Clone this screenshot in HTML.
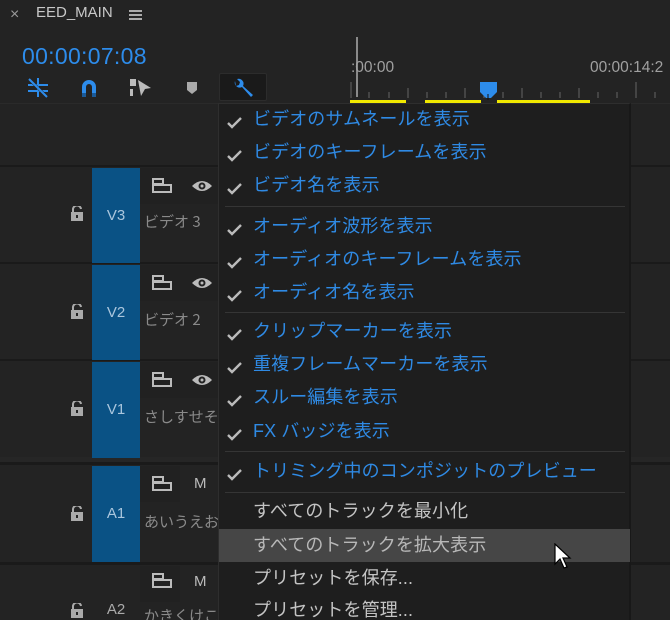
<!DOCTYPE html>
<html style="overflow:hidden;width:670px;height:620px"><head><meta charset="utf-8"><style>
*{margin:0;padding:0;box-sizing:border-box}
body{width:670px;height:620px;overflow:hidden;background:#232323;position:relative;font-family:"Liberation Sans","Noto Sans CJK JP",sans-serif;}
.a{position:absolute}
.row{position:absolute;left:0;width:670px;border-top:2px solid #1a1a1a}
.vb{position:absolute;left:92px;width:48px;background:#0a5285;color:#aac6dd;font-size:15px;text-align:center}
.menu{position:absolute;left:218px;top:103px;width:413px;height:517px;background:#1e1e1e;border:1px solid #2e2e2e;border-bottom:none;border-right:2px solid #181818}
.it{position:absolute;left:34px;font-size:18px;color:#2f8ae4;white-space:nowrap;letter-spacing:0.1px;line-height:24px}
.g{color:#c4c4c4}
.ck{position:absolute;left:8px;width:16px;height:12px}
.sep{position:absolute;left:6px;width:400px;height:1px;background:#353535}
.nm{position:absolute;left:144px;font-size:15px;color:#8a8a8a;white-space:nowrap;font-family:"Noto Sans CJK JP",sans-serif}
</style></head><body>
<div class="a" style="left:10px;top:6px;font-size:16px;color:#9a9a9a">×</div>
<div class="a" style="left:36px;top:4px;font-size:15px;color:#c8c8c8">EED_MAIN</div>
<div class="a" style="left:129px;top:10px;width:13px;height:2px;background:#aaa;box-shadow:0 4px 0 #aaa,0 8px 0 #aaa"></div>
<div class="a" style="left:22px;top:43px;font-size:23px;color:#2d8ceb;letter-spacing:0.3px">00:00:07:08</div>
<svg class="a" style="left:26px;top:77px" width="24" height="22"><g stroke="#2d8ceb" stroke-width="2"><line x1="12" y1="1" x2="12" y2="20"/><line x1="2" y1="8" x2="22" y2="8"/><line x1="2" y1="14" x2="22" y2="14"/><line x1="3" y1="2" x2="21" y2="20" stroke="#232323" stroke-width="3"/><line x1="3" y1="2" x2="21" y2="20"/></g></svg>
<svg class="a" style="left:80px;top:78px" width="18" height="20"><path d="M2 19V9a7 7 0 0 1 14 0v10h-4V9a3 3 0 0 0-6 0v10z" fill="#2d8ceb"/><rect x="2" y="15" width="4" height="4" fill="#1b5a98"/><rect x="12" y="15" width="4" height="4" fill="#1b5a98"/></svg>
<svg class="a" style="left:129px;top:78px" width="24" height="22"><path d="M1 1h6v7H1zM1 11h3v7H1zM9 2l13 8-6 1-4 7z" fill="#bbb"/></svg>
<svg class="a" style="left:186px;top:81px" width="12" height="14"><path d="M1 1h10v8l-5 4-5-4z" fill="#aaa"/></svg>
<div class="a" style="left:219px;top:73px;width:48px;height:28px;background:#1a1a1a;border:1px solid #2c2c2c;border-radius:2px"></div>
<svg class="a" style="left:231px;top:77px" width="24" height="22"><path d="M4 4a5 5 0 0 0 7 6l9 10 2-2-10-9a5 5 0 0 0-6-7l3 3-1 3-3 1z" fill="#2d8ceb"/></svg>
<div class="a" style="left:356px;top:37px;width:2px;height:60px;background:#8a8a8a"></div>
<div class="a" style="left:351px;top:59px;font-size:15.5px;color:#a0a0a0">:00:00</div>
<div class="a" style="left:590px;top:59px;font-size:15.5px;color:#a0a0a0">00:00:14:2</div>
<svg class="a" style="left:350px;top:80px" width="320" height="20"><g stroke="#666" stroke-width="1">
<line x1="1" y1="2" x2="1" y2="18"/><line x1="19" y1="12" x2="19" y2="18"/><line x1="39" y1="12" x2="39" y2="18"/><line x1="58" y1="8" x2="58" y2="18"/><line x1="77" y1="12" x2="77" y2="18"/><line x1="96" y1="12" x2="96" y2="18"/><line x1="115" y1="8" x2="115" y2="18"/><line x1="134" y1="12" x2="134" y2="18"/><line x1="153" y1="12" x2="153" y2="18"/><line x1="172" y1="8" x2="172" y2="18"/><line x1="191" y1="12" x2="191" y2="18"/><line x1="210" y1="12" x2="210" y2="18"/><line x1="229" y1="8" x2="229" y2="18"/><line x1="248" y1="12" x2="248" y2="18"/><line x1="267" y1="12" x2="267" y2="18"/><line x1="286" y1="2" x2="286" y2="18"/><line x1="305" y1="12" x2="305" y2="18"/></g>
<path d="M130 2h17v10l-6 6h-5l-6-6z" fill="#2d8ceb"/><line x1="138" y1="14" x2="138" y2="20" stroke="#111" stroke-width="1"/></svg>
<div class="a" style="left:350px;top:100px;width:56px;height:3px;background:#f0e800"></div>
<div class="a" style="left:425px;top:100px;width:56px;height:3px;background:#f0e800"></div>
<div class="a" style="left:497px;top:100px;width:93px;height:3px;background:#f0e800"></div>
<div class="a" style="left:0;top:103px;width:670px;height:1px;background:#2a2a2a"></div>
<div class="row" style="top:165px;height:99px"></div>
<div class="row" style="top:262px;height:99px"></div>
<div class="row" style="top:359px;height:99px"></div>
<div class="row" style="top:462px;height:99px;border-top:3px solid #1a1a1a"></div>
<div class="row" style="top:562px;height:58px;border-top:3px solid #1a1a1a"></div>
<div class="a" style="left:0;top:457px;width:670px;height:5px;background:#262626"></div>
<div class="vb" style="top:168px;height:95px;line-height:95px">V3</div>
<div class="vb" style="top:265px;height:95px;line-height:95px">V2</div>
<div class="vb" style="top:362px;height:96px;line-height:96px">V1</div>
<div class="vb" style="top:466px;height:96px;line-height:96px">A1</div>
<div class="a" style="left:92px;top:601px;width:48px;color:#aaa;font-size:15px;text-align:center">A2</div>
<div class="a" style="left:140px;top:168px;width:78px;height:36px;background:#212121"></div>
<div class="a" style="left:140px;top:265px;width:78px;height:36px;background:#212121"></div>
<div class="a" style="left:140px;top:362px;width:78px;height:36px;background:#212121"></div>
<div class="a" style="left:140px;top:466px;width:40px;height:36px;background:#212121"></div>
<div class="a" style="left:140px;top:566px;width:40px;height:36px;background:#212121"></div>
<div class="nm" style="top:211px">ビデオ 3</div>
<div class="nm" style="top:309px">ビデオ 2</div>
<div class="nm" style="top:406px">さしすせそ</div>
<div class="nm" style="top:511px">あいうえお</div>
<div class="nm" style="top:605px">かきくけこ</div>
<svg width="0" height="0" style="position:absolute"><defs>
<g id="lk"><rect x="0" y="6" width="12" height="9" fill="#aaa"/><path d="M2 6V4a4 4 0 0 1 8-1" stroke="#aaa" stroke-width="2" fill="none"/><rect x="5" y="9" width="2" height="3" fill="#232323"/></g>
<g id="sq"><path d="M1 1h10v5H1zM1 7h18v7H1z" fill="none" stroke="#bbb" stroke-width="2"/></g>
<g id="ey"><path d="M0 7Q10 -3 20 7Q10 17 0 7z" fill="#bbb"/><circle cx="10" cy="7" r="3.5" fill="#232323"/><circle cx="10" cy="7" r="1.5" fill="#bbb"/></g>
<g id="ck"><path d="M1 6l4 4 9-9" stroke="#bbb" stroke-width="2.4" fill="none"/></g>
</defs></svg>
<svg class="a" style="left:71px;top:206px" width="12" height="16"><use href="#lk"/></svg>
<svg class="a" style="left:71px;top:304px" width="12" height="16"><use href="#lk"/></svg>
<svg class="a" style="left:71px;top:401px" width="12" height="16"><use href="#lk"/></svg>
<svg class="a" style="left:71px;top:506px" width="12" height="16"><use href="#lk"/></svg>
<svg class="a" style="left:71px;top:603px" width="12" height="16"><use href="#lk"/></svg>
<svg class="a" style="left:152px;top:178px" width="20" height="16"><use href="#sq"/></svg>
<svg class="a" style="left:152px;top:275px" width="20" height="16"><use href="#sq"/></svg>
<svg class="a" style="left:152px;top:372px" width="20" height="16"><use href="#sq"/></svg>
<svg class="a" style="left:152px;top:476px" width="20" height="16"><use href="#sq"/></svg>
<svg class="a" style="left:152px;top:573px" width="20" height="16"><use href="#sq"/></svg>
<svg class="a" style="left:192px;top:179px" width="20" height="14"><use href="#ey"/></svg>
<svg class="a" style="left:192px;top:276px" width="20" height="14"><use href="#ey"/></svg>
<svg class="a" style="left:192px;top:373px" width="20" height="14"><use href="#ey"/></svg>
<div class="a" style="left:194px;top:475px;font-size:15px;color:#bbb">M</div>
<div class="a" style="left:194px;top:573px;font-size:15px;color:#bbb">M</div>
<div class="menu">
<svg class="ck" style="top:13px"><use href="#ck"/></svg><div class="it" style="top:3px">ビデオのサムネールを表示</div>
<svg class="ck" style="top:46px"><use href="#ck"/></svg><div class="it" style="top:36px">ビデオのキーフレームを表示</div>
<svg class="ck" style="top:79px"><use href="#ck"/></svg><div class="it" style="top:69px">ビデオ名を表示</div>
<div class="sep" style="top:102px"></div>
<svg class="ck" style="top:120px"><use href="#ck"/></svg><div class="it" style="top:110px">オーディオ波形を表示</div>
<svg class="ck" style="top:153px"><use href="#ck"/></svg><div class="it" style="top:143px">オーディオのキーフレームを表示</div>
<svg class="ck" style="top:186px"><use href="#ck"/></svg><div class="it" style="top:176px">オーディオ名を表示</div>
<div class="sep" style="top:208px"></div>
<svg class="ck" style="top:225px"><use href="#ck"/></svg><div class="it" style="top:215px">クリップマーカーを表示</div>
<svg class="ck" style="top:258px"><use href="#ck"/></svg><div class="it" style="top:248px">重複フレームマーカーを表示</div>
<svg class="ck" style="top:291px"><use href="#ck"/></svg><div class="it" style="top:281px">スルー編集を表示</div>
<svg class="ck" style="top:325px"><use href="#ck"/></svg><div class="it" style="top:315px">FX バッジを表示</div>
<div class="sep" style="top:347px"></div>
<svg class="ck" style="top:365px"><use href="#ck"/></svg><div class="it" style="top:355px">トリミング中のコンポジットのプレビュー</div>
<div class="sep" style="top:388px"></div>
<div class="it g" style="top:395px">すべてのトラックを最小化</div>
<div class="a" style="left:0;top:425px;width:411px;height:33px;background:#464646"></div>
<div class="it" style="top:429px;color:#b8b8b8">すべてのトラックを拡大表示</div>
<div class="it g" style="top:462px">プリセットを保存...</div>
<div class="it g" style="top:494px">プリセットを管理...</div>
</div>
<svg class="a" style="left:554px;top:543px" width="20" height="28"><path d="M1 1v20l5-5 4 9 3-1-4-9h7z" fill="#fff" stroke="#000" stroke-width="1.2"/></svg>
</body></html>
